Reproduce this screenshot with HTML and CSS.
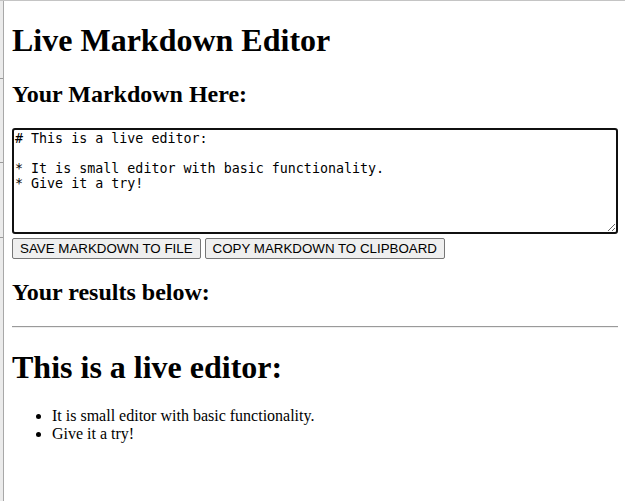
FILE: index.html
```html
<!DOCTYPE html>
<html lang="en">
<head>
<meta charset="utf-8">
<title>Live Markdown Editor</title>
<link rel="stylesheet" href="styles.css">
</head>
<body>
<div class="strip"></div>
<main class="page">
  <h1 class="title">Live Markdown Editor</h1>
  <h2 class="subtitle">Your Markdown Here:</h2>
  <textarea class="editor" spellcheck="false"># This is a live editor:

* It is small editor with basic functionality.
* Give it a try!</textarea>
  <div class="actions">
    <button class="btn" type="button">SAVE MARKDOWN TO FILE</button>
    <button class="btn" type="button">COPY MARKDOWN TO CLIPBOARD</button>
  </div>
  <h2 class="subtitle">Your results below:</h2>
  <hr class="divider">
  <section class="preview">
    <h1 class="title">This is a live editor:</h1>
    <ul class="list">
      <li>It is small editor with basic functionality.</li>
      <li>Give it a try!</li>
    </ul>
  </section>
</main>
</body>
</html>
```
FILE: styles.css
```css
html, body {
  margin: 0;
  padding: 0;
  background: #ffffff;
}
body {
  display: flex;
  min-height: 100vh;
  box-sizing: border-box;
  border-top: 1px solid #c4c4c4;
  font-family: "Liberation Serif", "Times New Roman", serif;
  color: #000;
}
.strip {
  flex: 0 0 3px;
  border-right: 1px solid #a8a8a8;
  background:
    linear-gradient(#9a9a9a, #9a9a9a) 0 77px / 100% 1px no-repeat,
    linear-gradient(#9a9a9a, #9a9a9a) 0 161px / 100% 1px no-repeat,
    linear-gradient(#9a9a9a, #9a9a9a) 0 236px / 100% 1px no-repeat,
    #ebebeb;
}
.page {
  flex: 1 1 auto;
  padding: 0 7px 0 8px;
  min-width: 0;
}
.title {
  font-size: 32px;
  font-weight: bold;
  margin: 21.44px 0;
}
.subtitle {
  font-size: 24px;
  font-weight: bold;
  margin: 19.92px 0;
}
.editor {
  display: block;
  box-sizing: border-box;
  width: 100%;
  height: 106px;
  margin: 0 0 4px 0;
  padding: 1px 1px;
  border: 2px solid #101010;
  border-radius: 3px;
  outline: none;
  font-family: "DejaVu Sans Mono", monospace;
  font-size: 13.333px;
  line-height: 15px;
  color: #000;
  background: #fff;
  resize: both;
}
.actions {
  display: flex;
  gap: 4px;
}
.btn {
  font-family: "Liberation Sans", Arial, sans-serif;
  font-size: 13.333px;
  height: 21px;
  padding: 1px 7px;
  background: #efefef;
  color: #000;
  border: 1px solid #767676;
  border-radius: 2px;
}
.divider {
  margin: 8px 0;
  border: 0;
  border-top: 1px solid #9a9a9a;
  border-bottom: 1px solid #eeeeee;
  height: 0;
}
.list {
  margin: 16px 0;
  padding-left: 40px;
  font-size: 16px;
}
```
